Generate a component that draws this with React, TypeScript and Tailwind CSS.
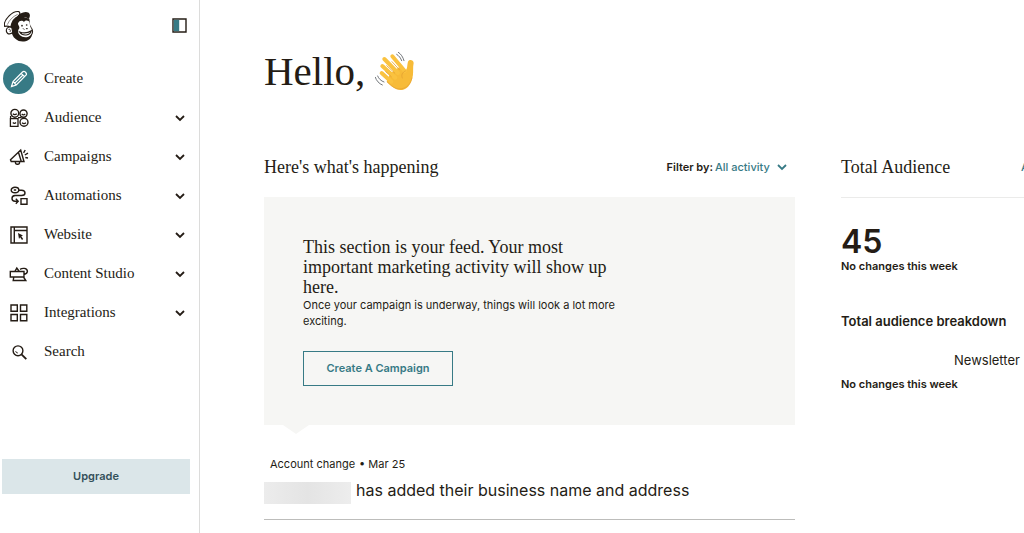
import { useState, type ReactNode } from "react";

type NavEntry = {
  label: string;
  icon: ReactNode;
  expandable?: boolean;
};

function FreddieLogo() {
  return (
    <svg viewBox="12 28 90 96" className="h-8 w-[30px]" aria-hidden="true">
      <path
        d="M38 50C32 62 31 74 34 84C34 98 38 108 47 115C56 124 74 125 85 118C92 114 95 108 96 103C101 96 100 86 95 81C93 76 90 74 90 70L88 54L60 45Z"
        fill="#241c15"
      />
      <path
        d="M54 68C58 58 68 59 72 64C77 57 87 59 89 66C90 73 90 77 93 82C98 88 97 98 92 103C85 112 68 112 60 104C53 98 52 89 58 83C60 77 53 74 54 68Z"
        fill="#fff"
      />
      <path d="M59 94C70 98 84 97 94 90C91 105 68 108 59 94Z" fill="#fff" stroke="#241c15" strokeWidth="3.5" />
      <path d="M70 84L72 86M79 84L82 84" stroke="#241c15" strokeWidth="3" strokeLinecap="round" />
      <circle cx="66" cy="75" r="2.5" fill="#241c15" />
      <circle cx="80" cy="73" r="2.5" fill="#241c15" />
      <path
        d="M14 77C11 68 18 55 28 45C36 37 47 31 57 33C61 36 60 41 56 47C46 50 36 62 32 80C26 76 18 76 14 77Z"
        fill="#fff"
        stroke="#241c15"
        strokeWidth="3.5"
      />
      <path d="M22 72C27 60 37 48 53 41" fill="none" stroke="#241c15" strokeWidth="1.5" />
      <path d="M50 50C57 38 73 31 86 36C91 40 91 48 86 55C76 48 64 47 55 55Z" fill="#241c15" />
      <path
        d="M36 82C30 76 20 80 19 88C18 96 25 102 31 99C34 99 37 97 38 94Z"
        fill="#fff"
        stroke="#241c15"
        strokeWidth="3.5"
      />
      <path d="M25 88C27 84 32 86 31 90L30 94" fill="none" stroke="#241c15" strokeWidth="2.5" />
    </svg>
  );
}

function WavingHand() {
  return (
    <svg viewBox="375 35 117 117" className="size-[39px]" role="img" aria-label="Waving hand">
      <path
        d="M474 64C476 56 491 57 491 68C487 84 493 103 484 122C477 144 458 154 440 147C430 143 419 133 410 124L420 100L448 80L466 91C473 86 471 74 474 64Z"
        fill="#f7bb38"
      />
      <path
        d="M395 98L424 124M397 77L436 112M403 56L444 98M427 48L464 92"
        stroke="#fac23f"
        strokeWidth="12"
        strokeLinecap="round"
      />
      <path
        d="M407 94L424 109M410 76L434 98M426 64L448 88M466 92C456 96 453 105 457 113"
        fill="none"
        stroke="#e3a232"
        strokeWidth="2.5"
        strokeLinecap="round"
      />
      <path
        d="M486 112C481 138 461 149 440 145C429 141 419 132 411 124"
        fill="none"
        stroke="#e8a534"
        strokeWidth="2.5"
      />
      <path
        d="M445 36C453 41 459 50 462 61M440 42C447 46 452 53 455 61M376 111C379 121 387 130 397 134M383 107C386 115 393 122 402 125"
        fill="none"
        stroke="#74787c"
        strokeWidth="3"
        strokeLinecap="round"
      />
    </svg>
  );
}

function Chevron({ className }: { className: string }) {
  return (
    <svg viewBox="0 0 10 10" className={className} fill="none" stroke="currentColor" strokeWidth="1.8" aria-hidden="true">
      <path d="M1 3L5 7L9 3" />
    </svg>
  );
}

function NavIcon({ children }: { children: ReactNode }) {
  return (
    <svg
      viewBox="0 0 20 20"
      className="size-5"
      fill="none"
      stroke="currentColor"
      strokeWidth="1.4"
      aria-hidden="true"
    >
      {children}
    </svg>
  );
}

const navEntries: NavEntry[] = [
  {
    label: "Create",
    icon: (
      <span className="flex size-[31px] items-center justify-center rounded-full bg-[#377a85] text-white">
        <NavIcon>
          <path d="M2.5 17.5L4 12.5L13.5 3Q15 1.6 16.5 3.2Q18.2 4.8 17 6.2L7.3 15.9ZM4 12.5L7.3 15.9M12.2 4.4L15.6 7.7M5.8 14.2L14 6" strokeWidth="1.2" />
        </NavIcon>
      </span>
    ),
  },
  {
    label: "Audience",
    expandable: true,
    icon: (
      <NavIcon>
        <circle cx="5.8" cy="5.3" r="3.9" />
        <circle cx="14.5" cy="5.6" r="3.6" />
        <circle cx="15" cy="14.2" r="4" />
        <path d="M1.4 10.7H9V18.3H1.4ZM3.8 5.8Q5.8 7.5 7.8 5.8M12.7 6Q14.5 7.7 16.2 6M3.8 14.5Q5.4 16.2 7 14.5M13 14.8Q15 16.5 17 14.8M1.6 8V11M9 9.7H12.5" strokeWidth="1.3" />
      </NavIcon>
    ),
  },
  {
    label: "Campaigns",
    expandable: true,
    icon: (
      <NavIcon>
        <path d="M1.5 12.8L11.7 3L15 14.5H2.2ZM9.4 5.3L12.3 14.5M6.4 14.7Q6.3 17.5 8.5 17.3Q10.7 17.5 10.6 14.7M14.6 5.8L16.2 3M15.8 8L19 6.2M16.3 10.5L19 11" />
      </NavIcon>
    ),
  },
  {
    label: "Automations",
    expandable: true,
    icon: (
      <NavIcon>
        <ellipse cx="6" cy="4" rx="3.8" ry="2.7" />
        <path d="M4.8 4H7.2M9.8 4.2H12.5Q16 4.4 16 7Q16 9.5 12.5 9.5H6Q3 9.7 3 12.4Q3 15 6 15.2H9M6.8 12.7L9.2 15.2L6.8 17.7M12 12.6H18V18.2H12Z" />
      </NavIcon>
    ),
  },
  {
    label: "Website",
    expandable: true,
    icon: (
      <NavIcon>
        <path d="M2 2H18V18H2ZM5.3 2V18M5.3 5.5H18" />
        <path d="M9 8L14 10.4L12.3 11.3L14.2 14L13 15L11.1 12.2L10 14Z" fill="currentColor" stroke="none" />
      </NavIcon>
    ),
  },
  {
    label: "Content Studio",
    expandable: true,
    icon: (
      <NavIcon>
        <path d="M1.3 7.5H15V13H1.3ZM5.8 7.5L7.8 4L10.3 7.5M11 5.3C13 4.1 18 3.5 18.4 7.2Q18.4 9.5 15 10.5M4.8 13L4.2 16.5H16.8L14.5 13" />
      </NavIcon>
    ),
  },
  {
    label: "Integrations",
    expandable: true,
    icon: (
      <NavIcon>
        <path d="M2 2H8.3V8.3H2ZM11.5 2H17.8V8.3H11.5ZM2 11.5H8.3V17.8H2ZM11.5 11.5H17.8V17.8H11.5Z" />
      </NavIcon>
    ),
  },
  {
    label: "Search",
    icon: (
      <NavIcon>
        <circle cx="9" cy="8.8" r="4.9" />
        <path d="M12.5 12.3L17.3 17.2" strokeWidth="1.8" />
        <path d="M6.7 9.2Q7 10.9 8.8 11" strokeWidth="1" />
      </NavIcon>
    ),
  },
];

function Sidebar() {
  return (
    <aside className="flex w-[200px] shrink-0 flex-col border-r border-[#dcdcdb]">
      <div className="flex h-[59px] items-start justify-between pt-[10px] pr-3 pl-1">
        <a href="#" aria-label="Home">
          <FreddieLogo />
        </a>
        <button type="button" aria-label="Toggle sidebar" className="mt-2">
          <svg viewBox="0 0 15 15" className="size-[15px]" aria-hidden="true">
            <path d="M1 1H14V14H1Z" fill="#fff" stroke="#241c15" strokeWidth="1.4" />
            <path d="M1.8 1.8H7.2V13.2H1.8Z" fill="#377a85" />
          </svg>
        </button>
      </div>
      <nav aria-label="Main">
        <ul>
          {navEntries.map((entry) => (
            <li key={entry.label}>
              <button type="button" className="flex h-[39px] w-full items-center pr-[14px] pl-[3px] text-left">
                <span className="flex w-[31px] justify-center">{entry.icon}</span>
                <span className="ml-[10px] flex-1 font-['Liberation_Serif',serif] text-[15px]">{entry.label}</span>
                {entry.expandable && <Chevron className="size-[10px]" />}
              </button>
            </li>
          ))}
        </ul>
      </nav>
      <button
        type="button"
        className="mt-auto mr-[9px] mb-[39px] ml-[2px] h-[35px] bg-[#dbe6e9] text-[11px] font-semibold text-[#33505a]"
      >
        Upgrade
      </button>
    </aside>
  );
}

function Feed() {
  const [filter, setFilter] = useState("all");

  return (
    <section className="min-w-0 flex-1">
      <header className="flex h-[60px] items-center justify-between">
        <h2 className="font-['Liberation_Serif',serif] text-[18px]">Here's what's happening</h2>
        <div className="flex items-center gap-[2px] pr-2 text-[11px]">
          <label htmlFor="filter" className="font-semibold">
            Filter by:
          </label>
          <div className="relative flex items-center text-[#377a85]">
            <select
              id="filter"
              value={filter}
              onChange={(e) => setFilter(e.target.value)}
              className="appearance-none bg-transparent pr-[17px] font-medium outline-none"
            >
              <option value="all">All activity</option>
            </select>
            <Chevron className="pointer-events-none absolute right-0 size-[10px]" />
          </div>
        </div>
      </header>

      <div className="bg-[#f6f6f4] px-[39px] pt-10 pb-[39px]">
        <div className="max-w-[316px]">
          <h3 className="font-['Liberation_Serif',serif] text-[18px] leading-5">
            This section is your feed. Your most important marketing activity will show up here.
          </h3>
          <p className="text-[11px] leading-4">
            Once your campaign is underway, things will look a lot more exciting.
          </p>
        </div>
        <button
          type="button"
          className="mt-[22px] h-[35px] w-[150px] border border-[#377a85] text-[11px] font-semibold text-[#377a85]"
        >
          Create A Campaign
        </button>
      </div>
      <svg viewBox="0 0 26 9" className="ml-[19px] h-[9px] w-[26px]" aria-hidden="true">
        <path d="M0 0H26L13 9Z" fill="#f6f6f4" />
      </svg>

      <article className="border-b border-[#bdbdbb] pb-[15px]">
        <p className="mt-[22px] flex gap-1 pl-[6px] text-[11px] leading-4">
          <span>Account change</span>
          <span>• Mar 25</span>
        </p>
        <div className="mt-[10px] flex items-start gap-[5px]">
          <span className="h-[22px] w-[87px] bg-linear-to-r from-[#ececec] via-[#e4e4e4] to-[#ededed]" />
          <p className="text-base leading-4">has added their business name and address</p>
        </div>
      </article>
    </section>
  );
}

function AudiencePanel() {
  return (
    <section className="w-[183px] shrink-0 whitespace-nowrap">
      <header className="flex h-[61px] items-center border-b border-[#ebebea]">
        <h2 className="w-[180px] shrink-0 font-['Liberation_Serif',serif] text-[18px]">Total Audience</h2>
        <a href="#" className="text-[11px] font-medium text-[#377a85]">
          A
        </a>
      </header>
      <p className="mt-7 text-[32px] leading-8 font-semibold">45</p>
      <p className="text-[11px] leading-4 font-semibold">No changes this week</p>
      <h3 className="mt-[37px] text-[13px] leading-5 font-semibold">Total audience breakdown</h3>
      <p className="mt-[19px] pl-[113px] text-[13px] leading-5">Newsletter</p>
      <p className="mt-[6px] text-[11px] leading-4 font-semibold">No changes this week</p>
    </section>
  );
}

export default function App() {
  return (
    <div className="flex min-h-screen overflow-hidden bg-white font-['Inter',sans-serif] text-[#241c15]">
      <Sidebar />
      <main className="min-w-0 flex-1 pl-16">
        <h1 className="flex h-[137px] items-center gap-[10px] pt-[6px] font-['Liberation_Serif',serif] text-[41px]">
          Hello, <WavingHand />
        </h1>
        <div className="flex gap-[46px]">
          <Feed />
          <AudiencePanel />
        </div>
      </main>
    </div>
  );
}
